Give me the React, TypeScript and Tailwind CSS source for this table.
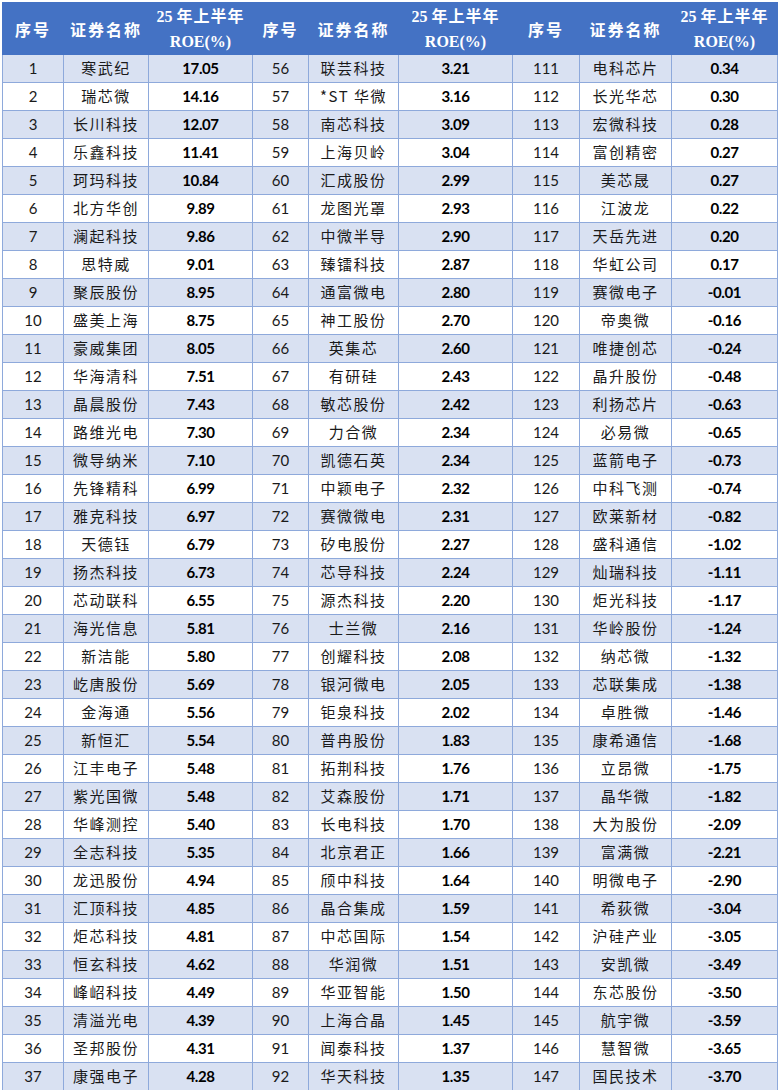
// 半导体公司 25 年上半年 ROE 排名表（三栏并排）

import { Fragment } from 'react';

type Row = [number, string, string];

const GROUP_A: Row[] = [
  [1, '寒武纪', '17.05'], [2, '瑞芯微', '14.16'], [3, '长川科技', '12.07'], [4, '乐鑫科技', '11.41'],
  [5, '珂玛科技', '10.84'], [6, '北方华创', '9.89'], [7, '澜起科技', '9.86'], [8, '思特威', '9.01'],
  [9, '聚辰股份', '8.95'], [10, '盛美上海', '8.75'], [11, '豪威集团', '8.05'], [12, '华海清科', '7.51'],
  [13, '晶晨股份', '7.43'], [14, '路维光电', '7.30'], [15, '微导纳米', '7.10'], [16, '先锋精科', '6.99'],
  [17, '雅克科技', '6.97'], [18, '天德钰', '6.79'], [19, '扬杰科技', '6.73'], [20, '芯动联科', '6.55'],
  [21, '海光信息', '5.81'], [22, '新洁能', '5.80'], [23, '屹唐股份', '5.69'], [24, '金海通', '5.56'],
  [25, '新恒汇', '5.54'], [26, '江丰电子', '5.48'], [27, '紫光国微', '5.48'], [28, '华峰测控', '5.40'],
  [29, '全志科技', '5.35'], [30, '龙迅股份', '4.94'], [31, '汇顶科技', '4.85'], [32, '炬芯科技', '4.81'],
  [33, '恒玄科技', '4.62'], [34, '峰岹科技', '4.49'], [35, '清溢光电', '4.39'], [36, '圣邦股份', '4.31'],
  [37, '康强电子', '4.28'],
];

const GROUP_B: Row[] = [
  [56, '联芸科技', '3.21'], [57, '*ST 华微', '3.16'], [58, '南芯科技', '3.09'], [59, '上海贝岭', '3.04'],
  [60, '汇成股份', '2.99'], [61, '龙图光罩', '2.93'], [62, '中微半导', '2.90'], [63, '臻镭科技', '2.87'],
  [64, '通富微电', '2.80'], [65, '神工股份', '2.70'], [66, '英集芯', '2.60'], [67, '有研硅', '2.43'],
  [68, '敏芯股份', '2.42'], [69, '力合微', '2.34'], [70, '凯德石英', '2.34'], [71, '中颖电子', '2.32'],
  [72, '赛微微电', '2.31'], [73, '矽电股份', '2.27'], [74, '芯导科技', '2.24'], [75, '源杰科技', '2.20'],
  [76, '士兰微', '2.16'], [77, '创耀科技', '2.08'], [78, '银河微电', '2.05'], [79, '钜泉科技', '2.02'],
  [80, '普冉股份', '1.83'], [81, '拓荆科技', '1.76'], [82, '艾森股份', '1.71'], [83, '长电科技', '1.70'],
  [84, '北京君正', '1.66'], [85, '颀中科技', '1.64'], [86, '晶合集成', '1.59'], [87, '中芯国际', '1.54'],
  [88, '华润微', '1.51'], [89, '华亚智能', '1.50'], [90, '上海合晶', '1.45'], [91, '闻泰科技', '1.37'],
  [92, '华天科技', '1.35'],
];

const GROUP_C: Row[] = [
  [111, '电科芯片', '0.34'], [112, '长光华芯', '0.30'], [113, '宏微科技', '0.28'], [114, '富创精密', '0.27'],
  [115, '美芯晟', '0.27'], [116, '江波龙', '0.22'], [117, '天岳先进', '0.20'], [118, '华虹公司', '0.17'],
  [119, '赛微电子', '-0.01'], [120, '帝奥微', '-0.16'], [121, '唯捷创芯', '-0.24'], [122, '晶升股份', '-0.48'],
  [123, '利扬芯片', '-0.63'], [124, '必易微', '-0.65'], [125, '蓝箭电子', '-0.73'], [126, '中科飞测', '-0.74'],
  [127, '欧莱新材', '-0.82'], [128, '盛科通信', '-1.02'], [129, '灿瑞科技', '-1.11'], [130, '炬光科技', '-1.17'],
  [131, '华岭股份', '-1.24'], [132, '纳芯微', '-1.32'], [133, '芯联集成', '-1.38'], [134, '卓胜微', '-1.46'],
  [135, '康希通信', '-1.68'], [136, '立昂微', '-1.75'], [137, '晶华微', '-1.82'], [138, '大为股份', '-2.09'],
  [139, '富满微', '-2.21'], [140, '明微电子', '-2.90'], [141, '希荻微', '-3.04'], [142, '沪硅产业', '-3.05'],
  [143, '安凯微', '-3.49'], [144, '东芯股份', '-3.50'], [145, '航宇微', '-3.59'], [146, '慧智微', '-3.65'],
  [147, '国民技术', '-3.70'],
];

const GROUPS = [GROUP_A, GROUP_B, GROUP_C];

// 列宽（px），每组三列：序号 / 名称 / ROE
const COL_WIDTHS = [61, 85, 104, 56, 90, 114, 67, 92, 106];

const cjk = "font-['Noto_Sans_CJK_SC','Noto_Sans',sans-serif]";
const num = "font-['Lato','Liberation_Sans',sans-serif]";

function HeaderCells() {
  return (
    <>
      <th className={`border border-[#4472C4] ${cjk} font-bold text-[16px] tracking-[2px] text-white`}>序号</th>
      <th className={`border border-[#4472C4] ${cjk} font-bold text-[16px] tracking-[2px] text-white`}>证券名称</th>
      <th className="border border-[#4472C4] text-white font-bold leading-[25px]">
        <div className="font-['Liberation_Serif',serif] text-[16px]">
          25 <span className={`${cjk} tracking-[1px]`}>年上半年</span>
        </div>
        <div className="font-['Liberation_Serif',serif] text-[16px]">ROE(%)</div>
      </th>
    </>
  );
}

export default function App() {
  return (
    <div className="w-[781px] h-[1090px] bg-white pt-[2px] pl-[2px]">
      <table className="table-fixed border-collapse w-[775px] text-black">
        <colgroup>
          {COL_WIDTHS.map((w, i) => (
            <col key={i} style={{ width: w }} />
          ))}
        </colgroup>
        <thead>
          <tr className="h-[51px] bg-[#4472C4]">
            <HeaderCells />
            <HeaderCells />
            <HeaderCells />
          </tr>
        </thead>
        <tbody>
          {GROUP_A.map((_, r) => (
            <tr key={r} className={`h-[28px] ${r % 2 === 0 ? 'bg-[#D9E1F2]' : 'bg-white'}`}>
              {GROUPS.map((g, gi) => {
                const [idx, name, roe] = g[r];
                return (
                  <Fragment key={gi}>
                    <td className={`border border-[#8EA9DB] text-center p-0 ${num} text-[15px] text-[#1a1a1a]`}>
                      {idx}
                    </td>
                    <td className={`border border-[#8EA9DB] text-center p-0 ${cjk} text-[15px] tracking-[1.5px] whitespace-nowrap text-[#1a1a1a]`}>
                      {name}
                    </td>
                    <td className={`border border-[#8EA9DB] text-center p-0 ${num} font-bold text-[15px] tracking-[-0.4px]`}>
                      {roe}
                    </td>
                  </Fragment>
                );
              })}
            </tr>
          ))}
        </tbody>
      </table>
    </div>
  );
}
